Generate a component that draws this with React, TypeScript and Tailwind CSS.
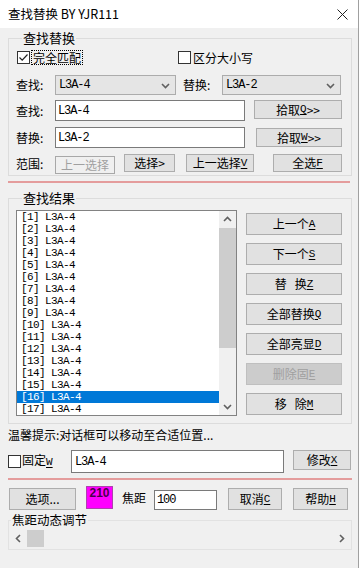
import React from "react";

const Chev = ({ dir }: { dir: "up" | "down" | "left" | "right" }) => {
  const d =
    dir === "up"
      ? "M1 6 L4.5 2.5 L8 6"
      : dir === "down"
      ? "M1 3 L4.5 6.5 L8 3"
      : dir === "left"
      ? "M6 1 L2.5 4.5 L6 8"
      : "M3 1 L6.5 4.5 L3 8";
  return (
    <svg width="9" height="9" viewBox="0 0 9 9">
      <path d={d} fill="none" stroke="#606060" strokeWidth="1.6" />
    </svg>
  );
};

const Btn = ({
  className,
  children,
  disabled,
}: {
  className: string;
  children: React.ReactNode;
  disabled?: boolean;
}) => (
  <div
    className={
      (disabled
        ? "border-[#bfbfbf] bg-[#cccccc] text-[#a0a0a0] "
        : "border-[#adadad] bg-[#e1e1e1] text-black ") +
      "flex shrink-0 items-center justify-center border text-[12px] leading-none " +
      className
    }
  >
    {children}
  </div>
);

const U = ({ c }: { c: string }) => (
  <span className="font-['Liberation_Mono',monospace] text-[11px] underline underline-offset-[2px]">{c}</span>
);

const Mono = ({ children }: { children: React.ReactNode }) => (
  <span className="font-['Liberation_Mono',monospace] text-[12px] tracking-[-1.1px]">{children}</span>
);

const Box = ({ checked }: { checked?: boolean }) => (
  <div className="flex h-[13px] w-[13px] shrink-0 items-center justify-center border border-[#333] bg-white">
    {checked && (
      <svg width="11" height="11" viewBox="0 0 11 11">
        <path d="M1.5 5.5 L4.2 8.2 L9.5 2.5" fill="none" stroke="#222" strokeWidth="1.2" />
      </svg>
    )}
  </div>
);

const Select = ({ className, value }: { className: string; value: string }) => (
  <div
    className={
      "flex h-[20px] shrink-0 items-center justify-between border border-[#acacac] bg-[#e5e5e5] pl-[3px] pr-[5px] " +
      className
    }
  >
    <Mono>{value}</Mono>
    <Chev dir="down" />
  </div>
);

const items = Array.from({ length: 17 }, (_, i) => i + 1);

export default function App() {
  return (
    <div className="h-[568px] w-[359px] overflow-hidden border-r border-[#a0a0a0] bg-[#f0f0f0] font-['Noto_Sans_CJK_SC',sans-serif] text-[12px] text-black">
      {/* title bar */}
      <div className="flex h-[28px] items-center justify-between bg-white pl-[8px] pr-[10px]">
        <span className="text-[12.5px] leading-none">查找替换 BY YJR111</span>
        <svg width="11" height="11" viewBox="0 0 11 11">
          <path d="M0.5 0.5 L10.5 10.5 M10.5 0.5 L0.5 10.5" stroke="#222" strokeWidth="1" />
        </svg>
      </div>

      {/* group 1 */}
      <fieldset className="ml-2 mt-[2px] w-[344px] border border-[#dcdcdc] pb-px pl-[7px] pr-[9px]">
        <legend className="ml-[6px] h-[16px] px-px text-[13px] leading-[16px]">查找替换</legend>
        <div className="mt-[3px] flex h-[16px] items-center">
          <div className="ml-px flex w-[161px] items-center">
            <Box checked />
            <span className="ml-px border border-dotted border-black px-px text-[12px] leading-[13px]">完全匹配</span>
          </div>
          <div className="flex items-center">
            <Box />
            <span className="ml-[2px] text-[12px] leading-[13px]">区分大小写</span>
          </div>
        </div>
        <div className="mt-[10px] flex h-[20px] items-center">
          <span className="w-[39px] shrink-0">查找:</span>
          <Select className="w-[121px]" value="L3A-4" />
          <span className="ml-[7px] w-[39px] shrink-0">替换:</span>
          <Select className="w-[119px]" value="L3A-2" />
        </div>
        <div className="mt-[5px] flex h-[21px] items-start">
          <span className="flex h-[21px] w-[39px] shrink-0 items-center">查找:</span>
          <div className="flex h-[21px] w-[190px] shrink-0 items-center border border-[#7a7a7a] bg-white pl-[2px]">
            <Mono>L3A-4</Mono>
          </div>
          <Btn className="ml-[9px] h-[19px] w-[88px]">
            拾取<U c="Q" />&gt;&gt;
          </Btn>
        </div>
        <div className="mt-[6px] flex h-[21px] items-start">
          <span className="flex h-[21px] w-[39px] shrink-0 items-center">替换:</span>
          <div className="flex h-[21px] w-[190px] shrink-0 items-center border border-[#7a7a7a] bg-white pl-[2px]">
            <Mono>L3A-2</Mono>
          </div>
          <Btn className="ml-[11px] mt-px h-[19px] w-[86px]">
            拾取<U c="W" />&gt;&gt;
          </Btn>
        </div>
        <div className="mt-[6px] flex h-[20px] items-start">
          <span className="flex h-[20px] w-[39px] shrink-0 items-center">范围:</span>
          <div className="mt-[2px] flex h-[18px] w-[60px] shrink-0 items-center justify-center border border-[#a8a8a8] text-[#a0a0a0]">
            上一选择
          </div>
          <Btn className="ml-[9px] h-[18px] w-[51px]">选择&gt;</Btn>
          <Btn className="ml-[11px] h-[18px] w-[68px]">
            上一选择<U c="V" />
          </Btn>
          <Btn className="ml-[19px] h-[18px] w-[69px]">
            全选<U c="F" />
          </Btn>
        </div>
      </fieldset>

      <div className="ml-2 mt-[5px] h-[2px] w-[342px] bg-[#e49c9c]" />

      {/* group 2 */}
      <fieldset className="ml-2 mt-[7px] w-[344px] border border-[#dcdcdc] pb-[7px] pl-[7px] pr-[9px]">
        <legend className="ml-[6px] h-[16px] px-px text-[13px] leading-[16px]">查找结果</legend>
        <div className="mt-[4px] flex">
          <div className="flex h-[206px] w-[221px] shrink-0 border border-[#828282] bg-white">
            <div className="flex w-[202px] flex-col overflow-hidden">
              {items.map((n) => (
                <div
                  key={n}
                  className={
                    "h-[12px] shrink-0 pl-[4px] font-['Liberation_Mono',monospace] text-[11px] leading-[12px] tracking-[-0.6px] " +
                    (n === 16 ? "bg-[#0078d7] text-white" : "text-black")
                  }
                >
                  {`[${n}] L3A-4`}
                </div>
              ))}
            </div>
            <div className="flex w-[17px] flex-col bg-[#f0f0f0]">
              <div className="flex h-[17px] items-center justify-center">
                <Chev dir="up" />
              </div>
              <div className="h-[120px] bg-[#cdcdcd]" />
              <div className="flex-1" />
              <div className="flex h-[17px] items-center justify-center">
                <Chev dir="down" />
              </div>
            </div>
          </div>
          <div className="ml-[9px] flex w-[96px] flex-col gap-[8px] pt-[3px]">
            <Btn className="h-[22px] w-[96px]">
              上一个<U c="A" />
            </Btn>
            <Btn className="h-[22px] w-[96px]">
              下一个<U c="S" />
            </Btn>
            <Btn className="h-[22px] w-[96px]">
              替&nbsp;&nbsp;&nbsp;换<U c="Z" />
            </Btn>
            <Btn className="h-[22px] w-[96px]">
              全部替换<U c="Q" />
            </Btn>
            <Btn className="h-[22px] w-[96px]">
              全部亮显<U c="D" />
            </Btn>
            <Btn disabled className="h-[22px] w-[96px]">
              删除固<U c="E" />
            </Btn>
            <Btn className="h-[22px] w-[96px]">
              移&nbsp;&nbsp;&nbsp;除<U c="M" />
            </Btn>
          </div>
        </div>
      </fieldset>

      <div className="ml-2 mt-[3px] h-[16px] leading-[16px]">温馨提示:对话框可以移动至合适位置...</div>

      <div className="ml-2 mt-[7px] flex h-[23px] items-start">
        <div className="flex w-[63px] shrink-0 items-center pt-[3px]">
          <Box />
          <span className="ml-px leading-[13px]">
            固定<U c="W" />
          </span>
        </div>
        <div className="h-[23px] w-[213px] shrink-0 border border-[#7a7a7a] bg-white pl-[3px] pt-[2px] leading-[14px]">
          <Mono>L3A-4</Mono>
        </div>
        <Btn className="ml-[9px] h-[20px] w-[58px]">
          修改<U c="X" />
        </Btn>
      </div>

      <div className="ml-2 mt-[5px] h-[2px] w-[344px] bg-[#e49c9c]" />

      <div className="ml-[9px] mt-[6px] flex h-[24px] items-start">
        <Btn className="mt-[2px] h-[22px] w-[67px]">选项...</Btn>
        <div className="ml-[10px] flex h-[23px] w-[27px] shrink-0 justify-center border border-[#b040b0] bg-[#ff00ff] font-['Liberation_Sans',sans-serif] text-[12px] font-bold leading-[13px] text-[#4a004a]">
          210
        </div>
        <span className="ml-[9px] flex h-[24px] items-center">焦距</span>
        <div className="ml-[8px] mt-[4px] flex h-[20px] w-[63px] shrink-0 items-center border border-[#7a7a7a] bg-white pl-[2px]">
          <Mono>100</Mono>
        </div>
        <Btn className="ml-[11px] mt-[2px] h-[22px] w-[54px]">
          取消<U c="C" />
        </Btn>
        <Btn className="ml-[11px] mt-[2px] h-[22px] w-[55px]">
          帮助<U c="H" />
        </Btn>
      </div>

      <fieldset className="ml-2 mt-[2px] w-[344px] border border-[#e2e2e2] pb-[2px]">
        <legend className="ml-[2px] h-[16px] px-px text-[12.5px] leading-[16px]">焦距动态调节</legend>
        <div className="mx-px mt-[2px] flex h-[17px] bg-[#f0f0f0]">
          <div className="flex w-[17px] items-center justify-center">
            <Chev dir="left" />
          </div>
          <div className="w-[17px] bg-[#cdcdcd]" />
          <div className="flex-1" />
          <div className="flex w-[17px] items-center justify-center">
            <Chev dir="right" />
          </div>
        </div>
      </fieldset>
    </div>
  );
}
